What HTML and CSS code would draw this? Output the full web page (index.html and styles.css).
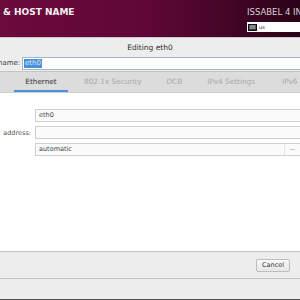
FILE: index.html
```html
<!DOCTYPE html>
<html lang="en">
<head>
    <meta charset="UTF-8">
    <title>Editing eth0</title>
    <link rel="stylesheet" href="styles.css">
</head>
<body>
    <header class="topbar">
        <div class="step-title">&amp; HOST NAME</div>
        <div class="brand">
            <div class="brand-name">ISSABEL 4 INSTALLATION</div>
            <div class="kbd-box">
                <svg width="9" height="7" viewBox="0 0 9 7"><rect x="0.5" y="0.5" width="8" height="6" fill="#333" stroke="#111"/><rect x="1.5" y="1.5" width="6" height="1" fill="#ddd"/><rect x="1.5" y="3.5" width="6" height="1" fill="#ddd"/></svg>
                <span>us</span>
            </div>
        </div>
    </header>

    <div class="dialog">
        <div class="dialog-title">Editing eth0</div>
        <div class="name-row">
            <label>name:</label>
            <div class="name-input"><span class="sel">eth0</span></div>
        </div>
        <nav class="tabs">
            <span class="tab active">Ethernet</span>
            <span class="tab">802.1x Security</span>
            <span class="tab">DCB</span>
            <span class="tab">IPv4 Settings</span>
            <span class="tab">IPv6</span>
        </nav>
        <section class="content">
            <div class="field-row">
                <label></label>
                <div class="field">eth0</div>
            </div>
            <div class="field-row">
                <label>address:</label>
                <div class="field"></div>
            </div>
            <div class="field-row">
                <label></label>
                <div class="field combo">automatic<span class="combo-btn"><i></i></span></div>
            </div>
        </section>
        <footer class="actions">
            <button class="btn">Cancel</button>
        </footer>
        <div class="below"></div>
    </div>
</body>
</html>
```

FILE: styles.css
```css
body {
    margin: 0;
    width: 300px;
    height: 300px;
    overflow: hidden;
    font-family: 'DejaVu Sans', sans-serif;
    background-color: #ededed;
}

.topbar {
    height: 37px;
    background: linear-gradient(90deg, #6c0a3c 0%, #5e0736 50%, #2a0318 100%);
    display: flex;
    justify-content: space-between;
    overflow: hidden;
}

.step-title {
    color: #f4f0f2;
    font-weight: bold;
    font-size: 9px;
    padding: 7px 0 0 3px;
    white-space: nowrap;
}

.brand {
    padding: 7px 0 0 0;
    width: 53px;
    overflow: hidden;
}

.brand-name {
    color: #d8d0d4;
    font-size: 8.5px;
    white-space: nowrap;
    height: 12px;
}

.kbd-box {
    margin-top: 3px;
    background-color: #fff;
    height: 10px;
    display: flex;
    align-items: center;
    gap: 2px;
    padding-left: 1px;
    font-size: 5px;
    color: #222;
}

.dialog {
    border-top: 1px solid #c9c9c9;
}

.dialog-title {
    text-align: center;
    font-size: 7.5px;
    color: #2e2e2e;
    height: 19px;
    line-height: 19px;
}

.name-row {
    display: flex;
    align-items: center;
    height: 12px;
    padding-bottom: 2px;
}

.name-row label {
    font-size: 7px;
    color: #444;
    width: 24px;
    margin-left: -2px;
}

.name-input {
    flex: 1;
    height: 11px;
    background-color: #fff;
    border: 1px solid #9eb7cc;
    border-right: none;
    display: flex;
    align-items: center;
    padding-left: 1px;
}

.sel {
    background-color: #4a90d9;
    color: #dde8f5;
    font-size: 7px;
    padding: 0 1px;
    line-height: 9px;
}

.tabs {
    height: 20px;
    background-color: #dcdcdc;
    border-top: 1px solid #c4c4c4;
    display: flex;
    align-items: center;
    font-size: 7.3px;
    color: #a8a8a8;
    white-space: nowrap;
}

.tab {
    height: 20px;
    line-height: 19px;
    box-sizing: border-box;
    padding: 0;
}

.tab.active {
    width: 54px;
    text-align: center;
    margin-left: 14px;
    color: #333;
    border-bottom: 2px solid #4a90d9;
}

.tabs .tab:nth-child(2) {
    margin-left: 16px;
}

.tabs .tab:nth-child(3) {
    margin-left: 25px;
}

.tabs .tab:nth-child(4) {
    margin-left: 25px;
}

.tabs .tab:nth-child(5) {
    margin-left: 27px;
}

.content {
    background-color: #fff;
    height: 159px;
    padding-top: 16px;
    box-sizing: border-box;
    border-top: 1px solid #d0d0d0;
}

.field-row {
    display: flex;
    align-items: center;
    margin-bottom: 4px;
}

.field-row label {
    width: 35px;
    font-size: 6.5px;
    color: #555;
    text-align: right;
    padding-right: 4px;
    box-sizing: border-box;
    white-space: nowrap;
}

.field {
    flex: 1;
    height: 13px;
    box-sizing: border-box;
    border: 1px solid #cfcfcf;
    border-right: none;
    background-color: #fbfbfb;
    font-size: 6.5px;
    color: #444;
    padding-left: 3px;
    line-height: 11px;
}

.combo {
    display: flex;
    justify-content: space-between;
}

.combo-btn {
    width: 15px;
    border-left: 1px solid #e4e4e4;
    display: flex;
    align-items: center;
    justify-content: center;
}

.combo-btn i {
    display: block;
    width: 5px;
    height: 1px;
    background-color: #c8c8c8;
}

.actions {
    height: 26px;
    border-top: 1px solid #c4c4c4;
    border-bottom: 1px solid #c4c4c4;
    display: flex;
    justify-content: flex-end;
    align-items: center;
    padding-right: 10px;
}

.btn {
    font-family: 'DejaVu Sans', sans-serif;
    font-size: 6.5px;
    color: #333;
    background: linear-gradient(#fafafa, #e6e6e6);
    border: 1px solid #bdbdbd;
    border-radius: 2px;
    width: 34px;
    height: 13px;
    padding: 0;
}

.below {
    height: 20px;
    border-bottom: 3px solid #555;
}
```
